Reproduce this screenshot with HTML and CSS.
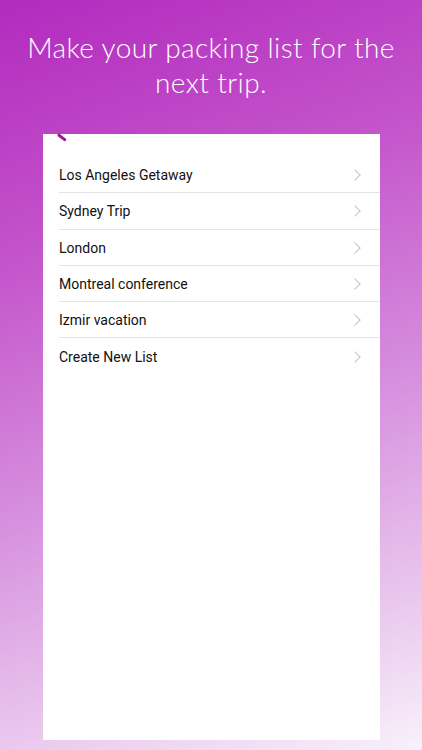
FILE: index.html
```html
<!DOCTYPE html>
<html>
  <head>
    <title>Packing Lists</title>
    <link rel="stylesheet" href="styles.css">
  </head>
  <body>
    <div class="screen">
      <h1 class="headline">Make your packing list for the next trip.</h1>

      <div class="phone">
        <span class="back-mark"></span>
        <ul class="list">
          <li class="list-item"><span>Los Angeles Getaway</span><span class="chevron"></span></li>
          <li class="list-item"><span>Sydney Trip</span><span class="chevron"></span></li>
          <li class="list-item"><span>London</span><span class="chevron"></span></li>
          <li class="list-item"><span>Montreal conference</span><span class="chevron"></span></li>
          <li class="list-item"><span>Izmir vacation</span><span class="chevron"></span></li>
          <li class="list-item"><span>Create New List</span><span class="chevron"></span></li>
        </ul>
      </div>
    </div>
  </body>
</html>
```

FILE: styles.css
```css
:root {
  --text-primary: #111111;
  --separator: #e4e4e6;
  --chevron: #c4c4c8;
  --accent: #9b1a8f;
}

html,
body {
  margin: 0;
  height: 100%;
}

body {
  font-family: Roboto, "Liberation Sans", sans-serif;
}

.screen {
  height: 750px;
  display: flex;
  flex-direction: column;
  background: linear-gradient(160deg, #b22abe 0%, #c455cb 30%, #d68fde 58%, #e9c6ed 82%, #f8f1fa 100%);
  overflow: hidden;
}

.headline {
  margin: 0;
  padding: 30px 10px 0;
  height: 104px;
  box-sizing: border-box;
  font-family: Lato, "Open Sans", sans-serif;
  font-weight: 300;
  font-size: 28px;
  letter-spacing: 0.4px;
  line-height: 35px;
  color: white;
  text-align: center;
}

.phone {
  position: relative;
  margin: 30px 42px 10px 43px;
  flex: 1;
  background-color: white;
  padding-top: 23px;
}

.back-mark {
  position: absolute;
  left: 15px;
  top: -1px;
  width: 10px;
  height: 2.5px;
  background-color: var(--accent);
  transform: rotate(37deg);
  transform-origin: left center;
  border-radius: 1px;
}

.list {
  list-style: none;
  margin: 0;
  padding: 0 0 0 16px;
}

.list-item {
  display: flex;
  align-items: center;
  justify-content: space-between;
  height: 36.3px;
  box-sizing: border-box;
  padding: 1px 21px 0 0;
  border-bottom: 1px solid var(--separator);
  font-size: 14px;
  color: var(--text-primary);
}

.list-item:last-child {
  border-bottom: none;
}

.chevron {
  width: 7px;
  height: 7px;
  border-top: 1.5px solid var(--chevron);
  border-right: 1.5px solid var(--chevron);
  transform: rotate(45deg);
}
```
